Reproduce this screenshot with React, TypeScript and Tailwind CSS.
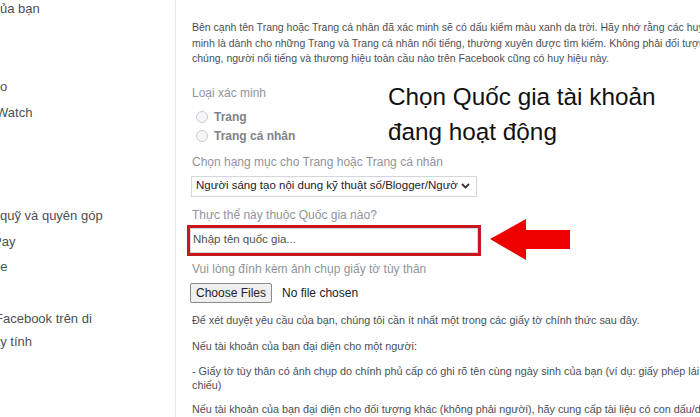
export default function App() {
  const font = { fontFamily: '"Liberation Sans", Arial, sans-serif' };
  return (
    <div className="flex h-[417px] w-[700px] overflow-hidden bg-white" style={font}>
      {/* sidebar, cropped on the left */}
      <div className="w-[176px] shrink-0 border-r border-[#e5e6e9] text-[13px] leading-none text-[#4b4f56]">
        <div className="mt-[2px] whitespace-nowrap">ủa bạn</div>
        <div className="mt-[65px] whitespace-nowrap">o</div>
        <div className="mt-[13px] -ml-[4px] whitespace-nowrap">Watch</div>
        <div className="mt-[90px] whitespace-nowrap">quỹ và quyên góp</div>
        <div className="mt-[13px] -ml-[7px] whitespace-nowrap">Pay</div>
        <div className="mt-[12px] -ml-[7px] whitespace-nowrap">be</div>
        <div className="mt-[39px] -ml-[5px] whitespace-nowrap">Facebook trên di</div>
        <div className="mt-[10px] -ml-[7px] whitespace-nowrap">ây tính</div>
      </div>

      {/* main column */}
      <div className="relative min-w-0 flex-1 pl-4 text-[#4b4f56]">
        <p className="mt-[20px] whitespace-nowrap text-[10.5px] leading-[15.5px]">
          Bên cạnh tên Trang hoặc Trang cá nhân đã xác minh sẽ có dấu kiểm màu xanh da trời. Hãy nhớ rằng các huy hiệu xác
          <br />
          minh là dành cho những Trang và Trang cá nhân nổi tiếng, thường xuyên được tìm kiếm. Không phải đối tượng công
          <br />
          chúng, người nổi tiếng và thương hiệu toàn cầu nào trên Facebook cũng có huy hiệu này.
        </p>

        <div className="mt-[20px] text-[12px] leading-none text-[#90949c]">Loại xác minh</div>
        <div className="mt-[12px] flex flex-col gap-[7px] text-[12px] font-bold leading-none text-[#7f8389]">
          <label className="flex items-center gap-[6px]">
            <span className="ml-[4px] h-[12px] w-[12px] rounded-full border border-[#c9ccd1] bg-[#f5f6f7]" />
            Trang
          </label>
          <label className="flex items-center gap-[6px]">
            <span className="ml-[4px] h-[12px] w-[12px] rounded-full border border-[#c9ccd1] bg-[#f5f6f7]" />
            Trang cá nhân
          </label>
        </div>

        <div className="mt-[14px] text-[12px] leading-none text-[#90949c]">Chọn hạng mục cho Trang hoặc Trang cá nhân</div>
        <div className="mt-[8px] -ml-[1px] flex h-[21px] w-[286px] items-center justify-between border border-[#d3d6db] pl-[4px] pr-[6px] text-[11.5px] text-[#1d2129]">
          <span className="whitespace-nowrap">Người sáng tạo nội dung kỹ thuật số/Blogger/Ngườ</span>
          <svg width="9" height="6" viewBox="0 0 9 6" className="shrink-0">
            <path d="M1 1l3.5 3.5L8 1" fill="none" stroke="#333" strokeWidth="1.8" />
          </svg>
        </div>

        <div className="mt-[12px] text-[12px] leading-none text-[#90949c]">Thực thể này thuộc Quốc gia nào?</div>
        <div className="mt-[4px] flex items-start">
          <div className="-ml-[5px] w-[294px] border-[3px] border-[#c8161d]">
            <div className="flex h-[25px] items-center border border-[#d3d6db] pl-[2px] text-[11.5px] text-[#4b4f56]">
              Nhập tên quốc gia...
            </div>
          </div>
          <svg width="82" height="43" viewBox="0 0 82 43" className="ml-[8px] -mt-[7px] -mb-[5px]">
            <polygon points="1,21 37,1 37,12 81,12 81,31 37,31 37,42" fill="#ee0000" />
          </svg>
        </div>

        <div className="mt-[7px] text-[12px] leading-none text-[#90949c]">Vui lòng đính kèm ảnh chụp giấy tờ tùy thân</div>
        <div className="mt-[8px] flex items-center text-[12px] text-[#222]">
          <span className="-ml-[2px] flex h-[20px] items-center rounded-[2px] border border-[#8a8a8a] bg-[#efefef] px-[5px]">Choose Files</span>
          <span className="ml-[10px]">No file chosen</span>
        </div>

        <p className="mt-[12px] whitespace-nowrap text-[10.8px] leading-none">Để xét duyệt yêu cầu của bạn, chúng tôi cần ít nhất một trong các giấy tờ chính thức sau đây.</p>
        <p className="mt-[16px] whitespace-nowrap text-[10.8px] leading-none">Nếu tài khoản của bạn đại diện cho một người:</p>
        <p className="mt-[12px] whitespace-nowrap text-[10.8px] leading-[14px]">
          - Giấy tờ tùy thân có ảnh chụp do chính phủ cấp có ghi rõ tên cùng ngày sinh của bạn (ví dụ: giấy phép lái xe, hộ
          <br />
          chiếu)
        </p>
        <p className="mt-[12px] whitespace-nowrap text-[10.8px] leading-none">Nếu tài khoản của bạn đại diện cho đối tượng khác (không phải người), hãy cung cấp tài liệu có con dấu/dấu</p>

        {/* annotation overlay */}
        <div className="absolute left-[212px] top-[79px] text-[24.3px] leading-[35px] text-[#111]">
          Chọn Quốc gia tài khoản
          <br />
          đang hoạt động
        </div>
      </div>
    </div>
  );
}
